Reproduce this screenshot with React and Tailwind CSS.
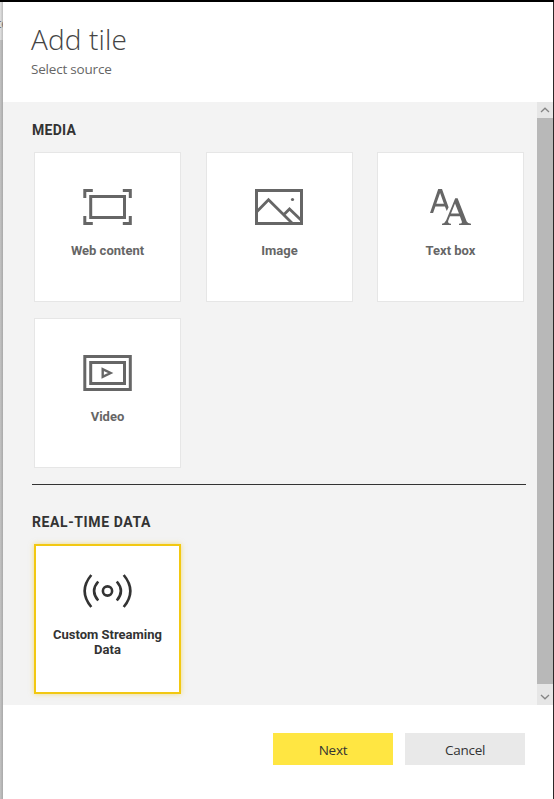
function WebIcon() {
  return (
    <svg width="49" height="36" viewBox="0 0 49 36" fill="none" stroke="#666" strokeWidth="3">
      <path d="M1.8 9V1.5H9.8M39.8 1.5H47.3V9M47.3 27V34.5H39.8M9.8 34.5H1.8V27" />
      <rect x="7.7" y="7.5" width="33.8" height="21" />
    </svg>
  );
}

function ImageIcon() {
  return (
    <svg width="49" height="36" viewBox="0 0 49 36" fill="none" stroke="#666" strokeWidth="3">
      <rect x="1.5" y="1.5" width="45" height="33" />
      <path d="M2 22.5L13.5 10.8L37.5 34.5M29 25.5L34.5 20L46.5 31.5" strokeWidth="2.8" />
      <circle cx="37.5" cy="10.5" r="1.6" fill="#666" stroke="none" />
    </svg>
  );
}

function TextIcon() {
  return (
    <svg width="49" height="36" viewBox="0 0 49 36" fill="#666">
      <path
        fillRule="evenodd"
        d="M12.2 0H16L22.6 18.2L20.8 22L18.9 17.5H9.4L7.1 24H4ZM14.1 4L10.3 14.8H17.9Z"
      />
      <path
        fillRule="evenodd"
        d="M29.2 9.2H31.6L40.7 32.4Q41.6 34.4 45 34.7V36H33V34.7Q36.5 34.6 35.8 32.4L33.9 27.2H24L22.3 31.4Q21.2 34.4 25 34.7V36H16V34.7Q18.8 34.4 20.2 31.2ZM29 14.6L25 24.6H33Z"
      />
    </svg>
  );
}

function VideoIcon() {
  return (
    <svg width="49" height="36" viewBox="0 0 49 36" fill="none" stroke="#666" strokeWidth="3">
      <rect x="1.8" y="1.5" width="45.5" height="33" />
      <rect x="7.7" y="7.5" width="33.8" height="21" />
      <path d="M19.7 14.2V21.8L27.6 18Z" strokeWidth="2.4" />
    </svg>
  );
}

function StreamIcon() {
  return (
    <svg width="49" height="36" viewBox="0 0 49 36" fill="none" stroke="#333" strokeWidth="2.6">
      <circle cx="24.5" cy="18" r="4.6" />
      <path d="M15.2 8.5Q7 18 15.2 27.5M33.8 8.5Q42 18 33.8 27.5" />
      <path d="M8.3 2Q-5 18 8.3 34M40.7 2Q54 18 40.7 34" />
    </svg>
  );
}

function Tile({ icon, selected, children }) {
  return (
    <button
      className={
        "flex h-[150px] w-[147px] flex-col items-center bg-white font-['Roboto',sans-serif] text-[13px] font-bold leading-[15px] " +
        (selected
          ? "border-2 border-[#f2c811] pt-[27px] text-[#333] shadow-[0_0_5px_rgba(242,200,17,0.5)]"
          : "border border-[#e6e6e6] pt-9 text-[#666]")
      }
    >
      {icon}
      <span className="mt-[18px] block">{children}</span>
    </button>
  );
}

function Chevron({ d }) {
  return (
    <svg width="10" height="6" viewBox="0 0 10 6" fill="none" stroke="#858585" strokeWidth="1.3">
      <path d={d} />
    </svg>
  );
}

export default function App() {
  return (
    <div className="flex h-[799px] w-[554px] flex-col overflow-hidden border-t-2 border-black bg-white font-['Noto_Sans','Open_Sans',sans-serif]">
      <div className="flex flex-1">
        <div className="relative w-[3px] shrink-0 overflow-hidden bg-linear-to-r from-[#c3c3c3] to-[#a9a9a9]">
          <div className="h-[38px] bg-linear-to-r from-[#e3e3e3] to-[#bcbcbc]" />
          <span className="absolute -left-[3px] top-[13px] text-[12px] text-[#777]">te</span>
        </div>
        <div className="flex min-w-0 flex-1 flex-col">
          <header className="h-[100px] pl-7 pt-[19px]">
            <h1 className="font-['Open_Sans',sans-serif] text-[28px] font-light leading-9 tracking-[0.15px] text-[#444]">
              Add tile
            </h1>
            <p className="mt-[3px] font-['Open_Sans',sans-serif] text-[13.5px] leading-[18px] tracking-[-0.2px] text-[#666]">
              Select source
            </p>
          </header>
          <div className="flex h-[603px]">
            <main className="flex-1 bg-[#f3f3f3] pl-[31px] pt-5 font-['Roboto',sans-serif]">
              <h2 className="-ml-0.5 text-[14px] font-bold leading-4 tracking-[0.25px] text-[#333]">MEDIA</h2>
              <div className="mt-[14px] grid grid-cols-[172px_171px_147px] gap-y-4">
                <Tile icon={<WebIcon />}>Web content</Tile>
                <Tile icon={<ImageIcon />}>Image</Tile>
                <Tile icon={<TextIcon />}>Text box</Tile>
                <Tile icon={<VideoIcon />}>Video</Tile>
              </div>
              <div className="-ml-0.5 mb-[29px] mt-4 h-px w-[494px] bg-[#333]" />
              <h2 className="-ml-0.5 text-[14px] font-bold leading-4 tracking-[0.6px] text-[#333]">REAL-TIME DATA</h2>
              <div className="mt-[14px]">
                <Tile icon={<StreamIcon />} selected>
                  Custom Streaming
                  <br />
                  Data
                </Tile>
              </div>
            </main>
            <div className="flex w-4 flex-col bg-[#e6e6e6]">
              <div className="flex h-4 items-center justify-center">
                <Chevron d="M1 5L5 1.2L9 5" />
              </div>
              <div className="h-[566px] bg-[#b8b8b8]" />
              <div className="flex h-[21px] items-center justify-center pt-1">
                <Chevron d="M1 1L5 4.8L9 1" />
              </div>
            </div>
          </div>
          <footer className="flex justify-end gap-3 pr-7 pt-7 font-['Open_Sans',sans-serif] text-[13.5px] leading-[34px] tracking-[-0.25px] text-[#333]">
            <button className="h-8 w-[120px] bg-[#ffe642]">Next</button>
            <button className="h-8 w-[120px] bg-[#e9e9e9]">Cancel</button>
          </footer>
        </div>
        <div className="w-px bg-[#2b2728]" />
      </div>
    </div>
  );
}
